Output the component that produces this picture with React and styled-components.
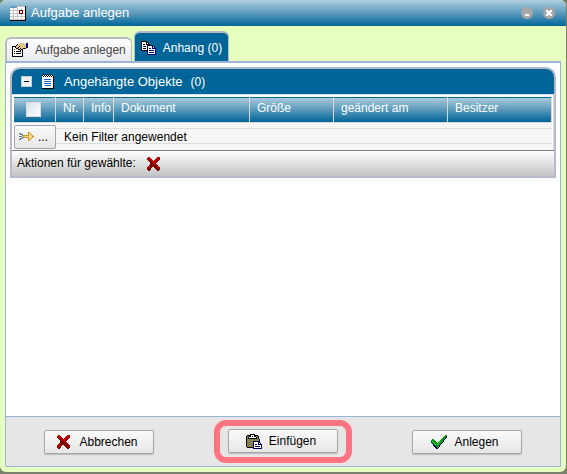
import React from 'react'
import styled, { createGlobalStyle, css } from 'styled-components'

const colors = {
  blue: '#006699',
  line: '#9bb4d8',
  frame: '#b4bac8',
  green: '#e6ffbf',
  footer: '#e6e6e6',
}

const bar = 'linear-gradient(#b0cfdf, #5c9bbc 50%, #006699)'

const GlobalStyle = createGlobalStyle`
  * {
    box-sizing: border-box;
  }
  html, body, #root {
    height: 100%;
  }
  body {
    margin: 0;
    background: #76806a;
    font: 12px/16px "Liberation Sans", Arial, sans-serif;
    color: #000;
  }
  button, input {
    font: inherit;
    color: inherit;
    margin: 0;
  }
`

const Page = styled.div`
  height: 100%;
  padding: 0 1px 2px 0;
`

const Dialog = styled.section`
  height: 100%;
  display: flex;
  flex-direction: column;
  background: ${colors.green};
  border-radius: 6px;
  overflow: hidden;
`

const TitleBar = styled.header`
  height: 26px;
  display: flex;
  align-items: center;
  gap: 5px;
  padding: 0 11px 0 10px;
  background: ${bar};
  color: #fff;
`

const Title = styled.h1`
  flex: 1;
  margin: 0;
  font-size: 13px;
  font-weight: normal;
`

const WindowButton = styled.button`
  width: 12px;
  height: 12px;
  padding: 0;
  margin-left: 5px;
  display: flex;
  align-items: center;
  justify-content: center;
  border: 0;
  border-radius: 50%;
  background: #a8a8a8;
`

const Tabs = styled.div`
  display: flex;
  align-items: flex-end;
  gap: 2px;
  height: 35px;
  padding-left: 5px;
`

const Tab = styled.button`
  display: flex;
  align-items: center;
  gap: 7px;
  height: 24px;
  padding: 0 5px 1px;
  border: 2px solid ${colors.frame};
  border-width: 2px 1px 0 2px;
  border-radius: 6px 6px 0 0;
  background: linear-gradient(#fff, #e8e8ee);
  color: #444;
  ${({ $active }) =>
    $active &&
    css`
      height: 30px;
      padding: 2px 6px 0;
      border-width: 2px 1px 0;
      background: ${colors.blue};
      color: #fff;
    `}
`

const Panel = styled.div`
  flex: 1;
  display: flex;
  flex-direction: column;
  margin: 0 5px 5px;
  border: 1px solid ${colors.line};
  border-top: 2px solid ${colors.line};
  background: #fff;
`

const Content = styled.main`
  flex: 1;
  padding: 4px;
`

const Group = styled.section`
  border: 2px solid ${colors.frame};
  border-radius: 10px 10px 0 0;
`

const GroupHeader = styled.header`
  height: 25px;
  display: flex;
  align-items: center;
  gap: 10px;
  padding: 0 9px;
  border-radius: 8px 8px 0 0;
  background: ${colors.blue};
  color: #fff;
`

const GroupTitle = styled.h2`
  display: flex;
  gap: 8px;
  margin: 0;
  font-size: 13px;
  font-weight: normal;
`

const Count = styled.span`
  font-size: 12px;
`

const Toggle = styled.button`
  width: 11px;
  height: 11px;
  padding: 0;
  display: flex;
  align-items: center;
  justify-content: center;
  border: 1px solid #c4cedb;
  background: #f0f0f0;
`

const TableWrap = styled.div`
  padding: 2px 1px 0 2px;
  border-top: 1px solid #d8dce4;
  border-right: 1px solid #ddd;
`

const Table = styled.table`
  width: 100%;
  table-layout: fixed;
  border-collapse: separate;
  border-spacing: 0;
`

const HeadRow = styled.tr`
  background: linear-gradient(${colors.blue} 1px, transparent 1px), ${bar};
`

const HeadCell = styled.th`
  width: ${({ $width }) => $width || 'auto'};
  height: 25px;
  padding: 0 0 3px 7px;
  border-right: 1px solid #d8d8d8;
  text-align: left;
  font-weight: normal;
  white-space: nowrap;
  color: #fff;
`

const Checkbox = styled.input`
  appearance: none;
  display: block;
  width: 15px;
  height: 15px;
  margin: 3px 0 0 5px;
  border: 1px solid #d6dde2;
  background: linear-gradient(135deg, #d5e2ea, #fff);
`

const FilterCell = styled.td`
  height: 28px;
  padding: 0 0 0 8px;
  border-top: 1px solid #d8d8d8;
  background: linear-gradient(
    #fff 1px,
    #f7f7f7 1px 5px,
    #ddd 5px 6px,
    #f7f7f7 6px 20px,
    #ddd 20px 21px,
    #f7f7f7 21px
  );
  &:first-child {
    padding: 0;
  }
`

const buttonFace = css`
  display: flex;
  align-items: center;
  border: 1px solid #a6a6a6;
  border-radius: 2px;
  background: linear-gradient(#fafafa, #e6e6e6);
`

const FilterButton = styled.button`
  ${buttonFace}
  width: 100%;
  height: 24px;
  gap: 4px;
  padding: 0 4px;
`

const Actions = styled.div`
  display: flex;
  align-items: center;
  gap: 10px;
  height: 26px;
  padding: 0 5px 2px;
  border-top: 1px solid #808080;
  background: linear-gradient(#fff, #c4c4c4);
`

const IconButton = styled.button`
  display: flex;
  padding: 2px 0 0;
  border: 0;
  background: none;
`

const Footer = styled.footer`
  display: flex;
  align-items: center;
  justify-content: space-between;
  height: 50px;
  padding: 0 38px;
  border-top: 1px solid ${colors.line};
  background: ${colors.footer};
`

const ActionButton = styled.button`
  ${buttonFace}
  justify-content: center;
  gap: 7px;
  width: 110px;
  height: 24px;
  padding: 0 4px 0 0;
  box-shadow: 0 1px 1px #bbb;
`

const Highlight = styled.div`
  padding: 3px 8px 4px;
  border: 6px solid #ff7482;
  border-radius: 12px;
`

const palette = {
  k: '#000',
  w: '#fff',
  g: '#c4c4c4',
  r: '#b80000',
  n: '#000060',
  m: '#0000a0',
  y: '#e0c48c',
  b: '#2060d0',
  o: '#808050',
  d: '#780000',
  e: '#009a10',
  l: '#40c840',
  s: '#5c7ca0',
  t: '#5ca0c4',
  a: '#d09820',
  f: '#f4d488',
}

// one character per pixel, a dot is transparent
const PixelIcon = ({ rows }) => (
  <svg
    width={rows[0].length}
    height={rows.length}
    shapeRendering="crispEdges"
    aria-hidden="true"
  >
    {rows.flatMap((row, y) =>
      [...row].map((c, x) =>
        palette[c] ? (
          <rect
            key={`${x}-${y}`}
            x={x}
            y={y}
            width="1"
            height="1"
            fill={palette[c]}
          />
        ) : null
      )
    )}
  </svg>
)

const calendar = [
  'tttttttggggggggk',
  'tttttttwwwwwwwwk',
  'wwwgwwwgwwwgwwwk',
  'wwwgwwwgwwwgwwwk',
  'gggggggggddddggk',
  'wwwgwwwgwdwwdwwk',
  'wwwgwwwgwdwwdwwk',
  'gggggggggddddggk',
  'wwwgwwwgwwwgwwwk',
  'wwwgwwwgwwwgwwwk',
  'gggggggggggggggk',
  'wwwgwwwgwwwgwwwk',
  'wwwgwwwgwwwgwwwk',
  'gggggggggggggggk',
  'kkkkkkkkkkkkkkkk',
]

const properties = [
  '.......yyyyy..nn',
  '.....kyyyyyyyymm',
  '....kyyyyyyyyymm',
  'kkkkyyykyyyyyymm',
  'kwwkyykyyyyyyynn',
  'kwwwkkyykyykkk..',
  'kwkwwwkkykk.....',
  'kwwwwwwwkwk.....',
  'kwkwkkkkkwk.....',
  'kwwwwwwwwwk.....',
  'kwkwkkkkkwk.....',
  'kwwwwwwwwwk.....',
  'kwwwwwwwwwk.....',
  'kkkkkkkkkkk.....',
]

const pages = [
  'kkkkkk.........',
  'kwwwwkk........',
  'kwwwwkwk.......',
  'kwkkwkkkk......',
  'kwwwwwnnnnnn...',
  'kwkkkwnwwwwnn..',
  'kwwwwwnwwwwnwn.',
  'kwkkkwnwnnwnnnn',
  'kwwwwwnwwwwwwwn',
  'kkkkkknwnnnnnwn',
  '......nwwwwwwwn',
  '......nwnnnnnwn',
  '......nwwwwwwwn',
  '......nnnnnnnnn',
]

const notepad = [
  '.k.k.k.k.k..',
  'kwkwkwkwkwk.',
  'wkwkwkwkwkwk',
  'wwwwwwwwwwwk',
  'wwwwwwwwwwwk',
  'wwbbbbbbbwwk',
  'wwwwwwwwwwwk',
  'wwbbbbbbbwwk',
  'wwwwwwwwwwwk',
  'wwbbbbbbbwwk',
  'wwwwwwwwwwwk',
  'wwwbbbbbbwwk',
  'wwwwwwwwwwwk',
  'wwwwwwwwwwwk',
  'kkkkkkkkkkkk',
]

const cross = [
  '..rr.......rrr..',
  '.rrrr.....rrrr..',
  '.drrrr...rrrrd..',
  '..drrrr.rrrrd...',
  '...ddrrrrrrd....',
  '....ddrrrrd.....',
  '....ddddrr......',
  '....dddddrr.....',
  '...rddddddrr....',
  '..rrdddddddrr...',
  '.rrrdd..ddddrr..',
  '.rrdd....ddddr..',
  '.rddd.....dddd..',
  '..dd.......dd...',
]

const check = [
  '..............ee',
  '.............een',
  '............eeen',
  '...........eeen.',
  '.ee.......eeen..',
  'eeee.....eeen...',
  'eleee...eleen...',
  'neleee.eleen....',
  '.neleeeleen.....',
  '..neleleen......',
  '..nneeeen.......',
  '...nneeen.......',
  '....nnen........',
  '.....nn.........',
]

const clipboard = [
  '....kkkkk.......',
  '.kkkkwwwkkkk....',
  'kookkwkwkkook...',
  'kokwwwwwwwkok...',
  'kokkkkkkkkkok...',
  'kooooooooooook..',
  'kooooooooooook..',
  'koooooonnnnnnk..',
  'koooooonwwwwnn..',
  'koooooonwwwwnwn.',
  'koooooonwnnwnnnn',
  'koooooonwwwwwwwn',
  'koooooonwnnnnnwn',
  '.kkkkkknwwwwwwwn',
  '.......nnnnnnnnn',
]

const filter = [
  '.........aa....',
  'ss.......afa...',
  '.sss.....affa..',
  '...saaaaaafffa.',
  'sss.affffffffaa',
  '...saaaaaafffa.',
  '.sss.....affa..',
  'ss.......afa...',
  '.........aa....',
]

const minus = ['......', '......', '......', '......', '.wwww.', '.wwww.']
const close = ['ww..ww', 'wwwwww', '.wwww.', '.wwww.', 'wwwwww', 'ww..ww']

const App = () => (
  <Page>
    <GlobalStyle />
    <Dialog>
      <TitleBar>
        <PixelIcon rows={calendar} />
        <Title>Aufgabe anlegen</Title>
        <WindowButton aria-label="Minimieren">
          <PixelIcon rows={minus} />
        </WindowButton>
        <WindowButton aria-label="Schließen">
          <PixelIcon rows={close} />
        </WindowButton>
      </TitleBar>
      <Tabs role="tablist">
        <Tab role="tab" aria-selected="false">
          <PixelIcon rows={properties} />
          Aufgabe anlegen
        </Tab>
        <Tab role="tab" aria-selected="true" $active>
          <PixelIcon rows={pages} />
          Anhang (0)
        </Tab>
      </Tabs>
      <Panel>
        <Content>
          <Group>
            <GroupHeader>
              <Toggle aria-label="Zuklappen">
                <PixelIcon rows={['kkkkk']} />
              </Toggle>
              <PixelIcon rows={notepad} />
              <GroupTitle>
                Angehängte Objekte <Count>(0)</Count>
              </GroupTitle>
            </GroupHeader>
            <TableWrap>
              <Table>
                <thead>
                  <HeadRow>
                    <HeadCell $width="42px">
                      <Checkbox type="checkbox" aria-label="Alle auswählen" />
                    </HeadCell>
                    <HeadCell $width="28px">Nr.</HeadCell>
                    <HeadCell $width="30px">Info</HeadCell>
                    <HeadCell>Dokument</HeadCell>
                    <HeadCell $width="84px">Größe</HeadCell>
                    <HeadCell $width="114px">geändert am</HeadCell>
                    <HeadCell $width="104px">Besitzer</HeadCell>
                  </HeadRow>
                </thead>
                <tbody>
                  <tr>
                    <FilterCell>
                      <FilterButton aria-label="Filter">
                        <PixelIcon rows={filter} />
                        ...
                      </FilterButton>
                    </FilterCell>
                    <FilterCell colSpan={6}>Kein Filter angewendet</FilterCell>
                  </tr>
                </tbody>
              </Table>
            </TableWrap>
            <Actions>
              Aktionen für gewählte:
              <IconButton aria-label="Löschen">
                <PixelIcon rows={cross} />
              </IconButton>
            </Actions>
          </Group>
        </Content>
        <Footer>
          <ActionButton>
            <PixelIcon rows={cross} />
            Abbrechen
          </ActionButton>
          <Highlight>
            <ActionButton>
              <PixelIcon rows={clipboard} />
              Einfügen
            </ActionButton>
          </Highlight>
          <ActionButton>
            <PixelIcon rows={check} />
            Anlegen
          </ActionButton>
        </Footer>
      </Panel>
    </Dialog>
  </Page>
)

export default App
